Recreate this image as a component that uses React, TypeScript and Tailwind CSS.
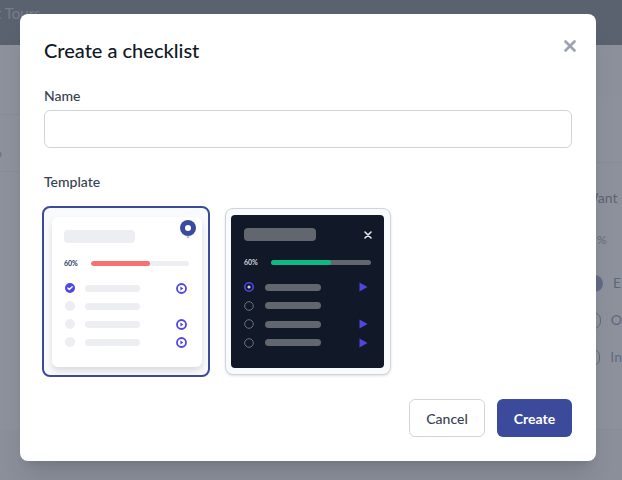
import React from 'react'

function CheckDot() {
  return (
    <svg width="10" height="10" viewBox="0 0 10 10">
      <circle cx="5" cy="5" r="5" fill="#4f46e5" />
      <path d="M2.8 5.1l1.5 1.5 2.9-2.9" fill="none" stroke="#fff" strokeWidth="1.4" strokeLinecap="round" strokeLinejoin="round" />
    </svg>
  )
}

function PlayRing() {
  return (
    <svg width="11" height="11" viewBox="0 0 11 11">
      <circle cx="5.5" cy="5.5" r="4.5" fill="#fff" stroke="#4f46e5" strokeWidth="1.8" />
      <path d="M4.4 3.6v3.8l3-1.9z" fill="#4f46e5" />
    </svg>
  )
}

function LightPreview() {
  const rows = [
    { done: true, play: true },
    { done: false, play: false },
    { done: false, play: true },
    { done: false, play: true },
  ]
  return (
    <div className="relative w-[150px] h-[150px] bg-white rounded-md shadow-[0_4px_6px_rgba(0,0,0,0.12)] pt-[13px] px-3">
      <div className="w-[71px] h-[13px] rounded bg-[#eceef2]" />
      <div className="absolute left-[128px] top-[3px] flex flex-col items-center">
        <div className="w-4 h-4 rounded-full bg-[#3c4a9b] flex items-center justify-center">
          <div className="w-[6px] h-[6px] rounded-full bg-white" />
        </div>
        <span className="text-[6px] leading-[6px] text-[#9ca3af] font-bold -mt-[2px]">×</span>
      </div>
      <div className="flex items-center mt-[15px] h-[10px]">
        <span className="text-[7px] font-bold text-[#1e3a5f] w-[27px]">60%</span>
        <div className="w-[98px] h-[5px] rounded-full bg-[#eceef2] overflow-hidden">
          <div className="h-full bg-[#f87171] rounded-full" style={{ width: '60%' }} />
        </div>
      </div>
      <div className="flex flex-col gap-2 mt-[15px]">
        {rows.map((r, i) => (
          <div key={i} className="flex items-center h-[10px]">
            <div className="w-[10px] h-[10px] ml-[1px]">
              {r.done ? <CheckDot /> : <div className="w-[10px] h-[10px] rounded-full bg-[#eceef2]" />}
            </div>
            <div className="w-[55px] h-[7px] rounded bg-[#eceef2] ml-[10px]" />
            <div className="ml-[36px] w-[11px] h-[11px]">{r.play && <PlayRing />}</div>
          </div>
        ))}
      </div>
    </div>
  )
}

function DarkPreview() {
  const rows = [
    { active: true, play: true },
    { active: false, play: false },
    { active: false, play: true },
    { active: false, play: true },
  ]
  return (
    <div className="w-[153px] h-[153px] bg-[#111827] rounded pt-[13px] px-[13px]">
      <div className="flex items-center justify-between">
        <div className="w-[72px] h-[13px] rounded bg-[#62666f]" />
        <svg width="8" height="8" viewBox="0 0 8 8" className="mr-[-1px]">
          <path d="M1 1l6 6M7 1l-6 6" stroke="#e5e7eb" strokeWidth="1.6" strokeLinecap="round" />
        </svg>
      </div>
      <div className="flex items-center mt-[16px] h-[10px]">
        <span className="text-[7px] font-bold text-[#d1d5db] w-[27px]">60%</span>
        <div className="w-[101px] h-[5px] rounded-full bg-[#62666f] overflow-hidden">
          <div className="h-full bg-[#10b981] rounded-full" style={{ width: '60%' }} />
        </div>
      </div>
      <div className="flex flex-col gap-[8.5px] mt-[15px]">
        {rows.map((r, i) => (
          <div key={i} className="flex items-center h-[10px]">
            <svg width="10" height="10" viewBox="0 0 10 10">
              {r.active ? (
                <>
                  <circle cx="5" cy="5" r="4.2" fill="none" stroke="#4f46e5" strokeWidth="1.6" />
                  <circle cx="5" cy="5" r="1.6" fill="#c7d2fe" />
                </>
              ) : (
                <circle cx="5" cy="5" r="4.3" fill="none" stroke="#6b7280" strokeWidth="1" />
              )}
            </svg>
            <div className="w-[56px] h-[7px] rounded bg-[#62666f] ml-[11px]" />
            <div className="ml-[38px] w-[10px] h-[10px]">
              {r.play && (
                <svg width="9" height="10" viewBox="0 0 9 10">
                  <path d="M0.5 0.5v9l8-4.5z" fill="#4f46e5" />
                </svg>
              )}
            </div>
          </div>
        ))}
      </div>
    </div>
  )
}

export default function App() {
  return (
    <div className="relative w-[622px] h-[480px] overflow-hidden bg-[#f3f4f6] font-['Lato','Noto_Sans',sans-serif]">
      {/* page behind the dialog */}
      <div className="h-[45px] bg-[#1f2937] flex items-start pt-[3px]">
        <span className="-ml-[4px] text-[15px] leading-5 text-[#9ca3af]">t Tours</span>
      </div>
      <div className="flex">
        <div className="w-[300px] bg-white">
          <div className="h-[70px] border-b border-[#e5e7eb]" />
          <div className="h-[57px] border-b border-[#e5e7eb] flex items-end pb-[8px] text-[14px] leading-5 text-[#6b7280] -ml-[6px]">o</div>
          <div className="h-[61px]" />
        </div>
        <div className="flex-1" />
        <div className="w-[120px] bg-white h-[385px] border-b border-[#e5e7eb]">
          <div className="h-[52px] bg-[#f9fafb]" />
          <div className="h-[66px] border-b border-[#e5e7eb]" />
          <div className="pl-[84px] pt-[25px] text-[14px] leading-5 text-[#1f2937]">
            <div className="-ml-[2px] whitespace-nowrap">Want</div>
            <div className="mt-[24px] ml-[11px] text-[12px] leading-4 text-[#4b5563]">%</div>
            <div className="flex flex-col gap-[17px] mt-[25px]">
              <div className="flex items-center gap-[10px] h-5">
                <div className="w-[17px] h-[17px] rounded-full bg-[#3c4a9b]" />
                <span className="text-[#374151]">E</span>
              </div>
              <div className="flex items-center gap-[10px] h-5">
                <div className="w-[17px] h-[17px] rounded-full border border-[#374151] bg-white" />
                <span className="text-[#374151]">O</span>
              </div>
              <div className="flex items-center gap-[10px] h-5">
                <div className="w-[17px] h-[17px] rounded-full border border-[#374151] bg-white" />
                <span className="text-[#3c4a9b]">In</span>
              </div>
            </div>
          </div>
        </div>
      </div>
      <div className="absolute inset-0 bg-[rgba(107,114,128,0.78)]" />

      {/* dialog */}
      <div className="absolute left-[20px] top-[14px] w-[576px] bg-white rounded-lg shadow-xl px-6 pt-6 pb-6">
        <div className="flex items-center justify-between">
          <h2 className="text-[20px] leading-6 text-[#111827] font-medium">Create a checklist</h2>
          <svg width="12" height="12" viewBox="0 0 12 12" className="mr-[-4px] -mt-[9px]">
            <path d="M1.5 1.5l9 9M10.5 1.5l-9 9" stroke="#9ca3af" strokeWidth="2.6" strokeLinecap="round" />
          </svg>
        </div>

        <label className="block mt-6 text-[14px] leading-5 font-medium text-[#374151]">Name</label>
        <input className="mt-1 block w-full h-[38px] rounded-md border border-[#d1d5db] px-3 text-[14px] outline-none" />

        <div className="mt-6 text-[14px] leading-5 font-medium text-[#374151]">Template</div>
        <div className="flex items-start mt-[14px] -ml-[2px]">
          <div className="w-[168px] h-[171px] rounded-lg border-2 border-[#3c4a9b] bg-[#f9fafb] pl-[8px] pt-[9px]">
            <LightPreview />
          </div>
          <div className="ml-[15px] mt-[2px] w-[166px] h-[167px] rounded-lg border border-[#d1d5db] bg-[#f9fafb] pl-[5px] pt-[6px] shadow-sm">
            <DarkPreview />
          </div>
        </div>

        <div className="flex justify-end gap-3 mt-[22px]">
          <button className="h-[38px] w-[76px] rounded-md border border-[#d1d5db] bg-white text-[14px] font-medium text-[#374151]">
            Cancel
          </button>
          <button className="h-[38px] w-[75px] rounded-md bg-[#3c4a9b] text-[14px] font-bold text-white">
            Create
          </button>
        </div>
      </div>
    </div>
  )
}
